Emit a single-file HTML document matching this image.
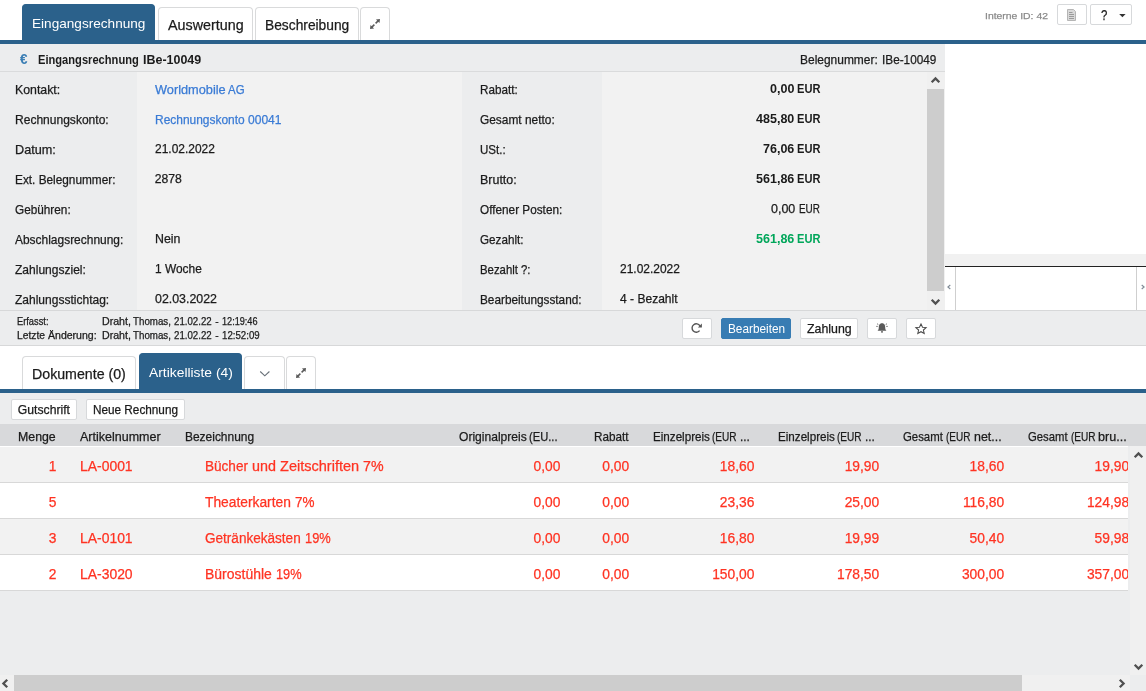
<!DOCTYPE html>
<html lang="de">
<head>
<meta charset="utf-8">
<title>Eingangsrechnung IBe-10049</title>
<style>
*{box-sizing:border-box;margin:0;padding:0}
html,body{width:1146px;height:691px;overflow:hidden;background:#fff}
body{position:relative;font-family:"Liberation Sans",sans-serif;color:#222;font-size:12px}
.a{position:absolute}
.t{position:absolute;white-space:nowrap;line-height:16px;-webkit-text-stroke:0.25px currentColor;transform-origin:0 0}
.tab{position:absolute;background:#fff;border:1px solid #d9dadb;border-bottom:none;border-radius:4px 4px 0 0}
.tab.act{background:#2b618b;border-color:#2b618b}
.blue{position:absolute;left:0;width:1146px;height:4px;background:#2b618b}
.btn{position:absolute;background:#fff;border:1px solid #d7d9db;border-radius:2px;height:21px}
.btn.pri{background:#377cb3;border-color:#377cb3;border-radius:2px}
.row{position:absolute;left:0;width:1128.1px;height:36px;border-bottom:1px solid #d8d8d8}
svg{position:absolute;overflow:visible}
</style>
</head>
<body>

<!-- ===== top tab strip ===== -->
<div class="tab act" style="left:22px;top:4px;width:133px;height:37px"></div>
<div class="tab" style="left:158px;top:7px;width:95px;height:34px"></div>
<div class="tab" style="left:255px;top:7px;width:104px;height:34px"></div>
<div class="tab" style="left:360px;top:7px;width:30px;height:34px"></div>
<svg style="left:370px;top:19px" width="10" height="10" viewBox="0 0 10 10"><g fill="#5a5a5a" stroke="none"><polygon points="10,0 5.9,0.5 9.5,4.1"/><polygon points="0,10 4.1,9.5 0.5,5.9"/></g><path d="M8.4 1.6 L5.6 4.4 M1.6 8.4 L4.4 5.6" stroke="#5a5a5a" stroke-width="1.5" fill="none"/></svg>
<div class="blue" style="top:40px"></div>

<div class="btn" style="left:1057px;top:4px;width:30px"></div>
<svg style="left:1067px;top:9px" width="9" height="12" viewBox="0 0 9 12"><path d="M0.5 0.5 H6.5 L8.5 2.5 V11.5 H0.5 Z" fill="#d9d9d9" stroke="#b5b5b5" stroke-width="1"/><path d="M2 3.5 H5.5 M2 5.5 H7 M2 7.5 H7 M2 9.5 H7" stroke="#9a9a9a" stroke-width="1"/></svg>
<div class="btn" style="left:1090px;top:4px;width:42px"></div>
<svg style="left:1119px;top:14px" width="7" height="4" viewBox="0 0 7 4"><polygon points="0.2,0 6.6,0 3.4,3.3" fill="#333"/></svg>

<!-- ===== detail panel ===== -->
<div class="a" style="left:0;top:44px;width:944.8px;height:28px;background:#ecedee;border-bottom:1px solid #dadbdc"></div>
<div class="a" style="left:0;top:72px;width:944.8px;height:238px;background:#f2f2f2"></div>
<div class="a" style="left:0;top:72px;width:137px;height:238px;background:#ecedee"></div>
<div class="a" style="left:462px;top:72px;width:140px;height:238px;background:#ecedee"></div>
<!-- panel scrollbar -->
<div class="a" style="left:927px;top:72px;width:17.8px;height:238px;background:#f0f0f0"></div>
<div class="a" style="left:927px;top:89px;width:16.8px;height:201.6px;background:#cdcdcd"></div>
<svg style="left:931px;top:77px" width="9" height="6" viewBox="0 0 9 6"><path d="M0.7 5.2 L4.5 1.4 L8.3 5.2" fill="none" stroke="#505050" stroke-width="2.3"/></svg>
<svg style="left:931px;top:299px" width="9" height="6" viewBox="0 0 9 6"><path d="M0.7 0.8 L4.5 4.6 L8.3 0.8" fill="none" stroke="#505050" stroke-width="2.3"/></svg>

<!-- right preview pane -->
<div class="a" style="left:945px;top:254px;width:201px;height:12px;background:#f1f1f1"></div>
<div class="a" style="left:945px;top:266px;width:201px;height:1px;background:#222"></div>
<div class="a" style="left:955px;top:267px;width:1px;height:43px;background:#cfcfcf"></div>
<div class="a" style="left:1136px;top:267px;width:1px;height:43px;background:#cfcfcf"></div>
<svg style="left:947px;top:284px" width="4" height="6" viewBox="0 0 4 6"><path d="M3.3 1 L0.9 3 L3.3 5" fill="none" stroke="#7f8a96" stroke-width="1.1"/></svg>
<svg style="left:1141px;top:284px" width="4" height="6" viewBox="0 0 4 6"><path d="M0.7 1 L3.1 3 L0.7 5" fill="none" stroke="#7f8a96" stroke-width="1.1"/></svg>

<!-- ===== footer / action bar ===== -->
<div class="a" style="left:0;top:310px;width:1146px;height:36px;background:#ecedee;border-top:1px solid #d7d8d9;border-bottom:1px solid #d7d8d9"></div>
<div class="btn" style="left:682px;top:318px;width:30px"></div>
<svg style="left:691px;top:323px" width="11" height="10" viewBox="0 0 11 10"><path d="M8.6 7.6 A4.2 4.2 0 1 1 8.9 2.9" fill="none" stroke="#555" stroke-width="1.4"/><polygon points="10.9,0.6 10.9,4.6 6.9,4.6" fill="#555"/></svg>
<div class="btn pri" style="left:721px;top:318px;width:70px"></div>
<div class="btn" style="left:800px;top:318px;width:58px"></div>
<div class="btn" style="left:867px;top:318px;width:30px"></div>
<svg style="left:876px;top:323px" width="12" height="10" viewBox="0 0 12 10"><path d="M6 0.2 C3.3 0.2 2.8 2.6 2.8 4.4 C2.8 6 2.3 6.8 1.5 7.7 H10.5 C9.7 6.8 9.2 6 9.2 4.4 C9.2 2.6 8.7 0.2 6 0.2 Z" fill="#5a5a5a"/><path d="M5 8.3 H7 V9 A1 0.8 0 0 1 5 9 Z" fill="#5a5a5a"/><path d="M0.2 3.4 H1.8 M10.2 3.4 H11.8 M1 0.7 L2.3 1.6 M11 0.7 L9.7 1.6" stroke="#5a5a5a" stroke-width="0.8"/></svg>
<div class="btn" style="left:906px;top:318px;width:30px"></div>
<svg style="left:915px;top:323px" width="12" height="11" viewBox="0 0 12 11"><path d="M6 0.9 L7.5 4.2 L11.1 4.6 L8.4 7 L9.2 10.5 L6 8.7 L2.8 10.5 L3.6 7 L0.9 4.6 L4.5 4.2 Z" fill="none" stroke="#4a4a4a" stroke-width="1.05" stroke-linejoin="miter"/></svg>

<!-- ===== lower tab strip ===== -->
<div class="tab" style="left:22px;top:356px;width:114px;height:34px"></div>
<div class="tab act" style="left:139px;top:353px;width:103px;height:37px"></div>
<div class="tab" style="left:244px;top:356px;width:41px;height:34px"></div>
<svg style="left:260px;top:370.6px" width="10" height="6" viewBox="0 0 10 6"><path d="M0.2 0.5 L4.8 4.8 L9.4 0.5" fill="none" stroke="#687078" stroke-width="1.1"/></svg>
<div class="tab" style="left:286px;top:356px;width:30px;height:34px"></div>
<svg style="left:296px;top:368px" width="10" height="10" viewBox="0 0 10 10"><g fill="#5a5a5a" stroke="none"><polygon points="10,0 5.9,0.5 9.5,4.1"/><polygon points="0,10 4.1,9.5 0.5,5.9"/></g><path d="M8.4 1.6 L5.6 4.4 M1.6 8.4 L4.4 5.6" stroke="#5a5a5a" stroke-width="1.5" fill="none"/></svg>
<div class="blue" style="top:389px"></div>

<!-- ===== grid ===== -->
<div class="a" style="left:0;top:393px;width:1146px;height:298px;background:#ecedee"></div>
<div class="btn" style="left:11px;top:399px;width:66px"></div>
<div class="btn" style="left:86px;top:399px;width:99px"></div>
<div class="a" style="left:0;top:424px;width:1146px;height:22px;background:#d8d9db"></div>
<div class="a" style="left:0;top:446px;width:1128.1px;height:1px;background:#fff;z-index:1"></div>
<div class="row" style="top:446px;height:37px;background:#f2f2f2"></div>
<div class="row" style="top:483px;background:#fff"></div>
<div class="row" style="top:519px;background:#f2f2f2"></div>
<div class="row" style="top:555px;background:#fff"></div>
<!-- grid scrollbars -->
<div class="a" style="left:1128.1px;top:446px;width:2px;height:229px;background:#ecedee;z-index:3"></div>
<div class="a" style="left:1130px;top:446px;width:16px;height:229px;background:#f0f0f0;z-index:3"></div>
<svg style="left:1134px;top:452px;z-index:4" width="9" height="6" viewBox="0 0 9 6"><path d="M0.7 5.2 L4.5 1.4 L8.3 5.2" fill="none" stroke="#505050" stroke-width="2.3"/></svg>
<svg style="left:1134px;top:664px;z-index:4" width="9" height="6" viewBox="0 0 9 6"><path d="M0.7 0.8 L4.5 4.6 L8.3 0.8" fill="none" stroke="#505050" stroke-width="2.3"/></svg>
<div class="a" style="left:0;top:675px;width:1130px;height:16px;background:#f0f0f0"></div>
<div class="a" style="left:14px;top:675px;width:1008px;height:16px;background:#cdcdcd"></div>
<svg style="left:2px;top:679px" width="6" height="9" viewBox="0 0 6 9"><path d="M5.2 0.7 L1.4 4.5 L5.2 8.3" fill="none" stroke="#505050" stroke-width="2.3"/></svg>
<svg style="left:1119px;top:679px" width="6" height="9" viewBox="0 0 6 9"><path d="M0.8 0.7 L4.6 4.5 L0.8 8.3" fill="none" stroke="#505050" stroke-width="2.3"/></svg>

<!-- ===== text ===== -->
<div id="txt" style="position:absolute;left:0;top:0;width:1146px;height:691px;z-index:2;will-change:transform">
<div class="t" style="font-size:13.5px;color:#fff;-webkit-text-stroke:0;left:31.80px;top:16.00px;transform:scaleX(1.0072);">Eingangsrechnung</div>
<div class="t" style="font-size:14.2px;color:#1b1b1b;left:167.60px;top:17.00px;transform:scaleX(1.0092);">Auswertung</div>
<div class="t" style="font-size:14.2px;color:#1b1b1b;left:264.71px;top:17.00px;transform:scaleX(0.9713);">Beschreibung</div>
<div class="t" style="font-size:9.9px;color:#8a8a8a;left:984.77px;top:8.00px;transform:scaleX(1.0519);">Interne ID: 42</div>
<div class="t" style="font-size:14.3px;color:#222;left:1101.40px;top:7.00px;transform:scaleX(0.8);">?</div>
<div class="t" style="font-size:14.5px;color:#3b7eb4;font-weight:700;-webkit-text-stroke:0;left:19.60px;top:51.20px;transform:scaleX(0.93);">€</div>
<div>
<span class="t" style="font-size:12.2px;color:#1b1b1b;font-weight:700;-webkit-text-stroke:0;left:38.04px;top:52.00px;transform:scaleX(0.9134);">Eingangsrechnung </span>
<span class="t" style="font-size:12.2px;color:#1b1b1b;font-weight:700;-webkit-text-stroke:0;left:142.89px;top:52.00px;transform:scaleX(1.0229);">IBe-10049</span>
</div>
<div>
<span class="t" style="font-size:12.2px;color:#1b1b1b;left:800.11px;top:52.00px;transform:scaleX(0.9813);">Belegnummer: </span>
<span class="t" style="font-size:12.2px;color:#1b1b1b;left:881.52px;top:52.00px;transform:scaleX(0.9665);">IBe-10049</span>
</div>
<div class="t" style="font-size:12.2px;color:#1b1b1b;left:14.69px;top:82.00px;transform:scaleX(1.0110);">Kontakt:</div>
<div class="t" style="font-size:12.2px;color:#1b1b1b;left:14.71px;top:112.00px;transform:scaleX(0.9876);">Rechnungskonto:</div>
<div class="t" style="font-size:12.2px;color:#1b1b1b;left:14.68px;top:142.00px;transform:scaleX(1.0392);">Datum:</div>
<div class="t" style="font-size:12.2px;color:#1b1b1b;left:14.72px;top:172.00px;transform:scaleX(0.9694);">Ext. Belegnummer:</div>
<div class="t" style="font-size:12.2px;color:#1b1b1b;left:14.72px;top:202.00px;transform:scaleX(0.9665);">Gebühren:</div>
<div class="t" style="font-size:12.2px;color:#1b1b1b;left:14.71px;top:232.00px;transform:scaleX(0.9805);">Abschlagsrechnung:</div>
<div class="t" style="font-size:12.2px;color:#1b1b1b;left:14.71px;top:262.00px;transform:scaleX(0.9871);">Zahlungsziel:</div>
<div class="t" style="font-size:12.2px;color:#1b1b1b;left:14.71px;top:292.00px;transform:scaleX(0.9859);">Zahlungsstichtag:</div>
<div>
<span class="t" style="font-size:12.2px;color:#3a7bd5;left:154.68px;top:82.00px;transform:scaleX(1.0464);">Worldmobile </span>
<span class="t" style="font-size:12.2px;color:#3a7bd5;left:227.73px;top:82.00px;transform:scaleX(0.9392);">AG</span>
</div>
<div>
<span class="t" style="font-size:12.2px;color:#3a7bd5;left:155.11px;top:112.00px;transform:scaleX(0.9803);">Rechnungskonto </span>
<span class="t" style="font-size:12.2px;color:#3a7bd5;left:247.81px;top:112.00px;transform:scaleX(0.9881);">00041</span>
</div>
<div class="t" style="font-size:12.2px;color:#1b1b1b;left:154.71px;top:141.00px;transform:scaleX(0.9817);">21.02.2022</div>
<div class="t" style="font-size:12.2px;color:#1b1b1b;left:154.70px;top:171.00px;">2878</div>
<div class="t" style="font-size:12.2px;color:#1b1b1b;left:154.69px;top:231.00px;transform:scaleX(1.0134);">Nein</div>
<div class="t" style="font-size:12.2px;color:#1b1b1b;left:154.71px;top:261.00px;transform:scaleX(0.9771);">1 Woche</div>
<div class="t" style="font-size:12.2px;color:#1b1b1b;left:154.69px;top:291.00px;transform:scaleX(1.0167);">02.03.2022</div>
<div class="t" style="font-size:12.2px;color:#1b1b1b;left:479.82px;top:82.00px;transform:scaleX(0.9583);">Rabatt:</div>
<div class="t" style="font-size:12.2px;color:#1b1b1b;left:479.81px;top:112.00px;transform:scaleX(0.9756);">Gesamt netto:</div>
<div class="t" style="font-size:12.2px;color:#1b1b1b;left:479.83px;top:142.00px;transform:scaleX(0.9466);">USt.:</div>
<div class="t" style="font-size:12.2px;color:#1b1b1b;left:479.79px;top:172.00px;transform:scaleX(1.0227);">Brutto:</div>
<div class="t" style="font-size:12.2px;color:#1b1b1b;left:479.82px;top:202.00px;transform:scaleX(0.9662);">Offener Posten:</div>
<div class="t" style="font-size:12.2px;color:#1b1b1b;left:479.82px;top:232.00px;transform:scaleX(0.9574);">Gezahlt:</div>
<div class="t" style="font-size:12.2px;color:#1b1b1b;left:479.83px;top:262.00px;transform:scaleX(0.9323);">Bezahlt ?:</div>
<div class="t" style="font-size:12.2px;color:#1b1b1b;left:479.82px;top:292.00px;transform:scaleX(0.9670);">Bearbeitungsstand:</div>
<div>
<span class="t" style="font-size:12.2px;color:#1b1b1b;font-weight:700;-webkit-text-stroke:0;left:769.69px;top:81.00px;transform:scaleX(1.0293);">0,00 </span>
<span class="t" style="font-size:12.2px;color:#1b1b1b;font-weight:700;-webkit-text-stroke:0;left:797.05px;top:81.00px;transform:scaleX(0.9097);">EUR</span>
</div>
<div>
<span class="t" style="font-size:12.2px;color:#1b1b1b;font-weight:700;-webkit-text-stroke:0;left:755.79px;top:111.00px;transform:scaleX(1.0281);">485,80 </span>
<span class="t" style="font-size:12.2px;color:#1b1b1b;font-weight:700;-webkit-text-stroke:0;left:797.05px;top:111.00px;transform:scaleX(0.9097);">EUR</span>
</div>
<div>
<span class="t" style="font-size:12.2px;color:#1b1b1b;font-weight:700;-webkit-text-stroke:0;left:762.79px;top:141.00px;transform:scaleX(1.0271);">76,06 </span>
<span class="t" style="font-size:12.2px;color:#1b1b1b;font-weight:700;-webkit-text-stroke:0;left:797.05px;top:141.00px;transform:scaleX(0.9097);">EUR</span>
</div>
<div>
<span class="t" style="font-size:12.2px;color:#1b1b1b;font-weight:700;-webkit-text-stroke:0;left:755.79px;top:171.00px;transform:scaleX(1.0281);">561,86 </span>
<span class="t" style="font-size:12.2px;color:#1b1b1b;font-weight:700;-webkit-text-stroke:0;left:797.05px;top:171.00px;transform:scaleX(0.9097);">EUR</span>
</div>
<div>
<span class="t" style="font-size:12.2px;color:#1b1b1b;left:771.49px;top:201.00px;transform:scaleX(1.0249);">0,00 </span>
<span class="t" style="font-size:12.2px;color:#1b1b1b;left:799.49px;top:201.00px;transform:scaleX(0.8126);">EUR</span>
</div>
<div>
<span class="t" style="font-size:12.2px;color:#00a65a;font-weight:700;-webkit-text-stroke:0;left:755.79px;top:231.00px;transform:scaleX(1.0281);">561,86 </span>
<span class="t" style="font-size:12.2px;color:#00a65a;font-weight:700;-webkit-text-stroke:0;left:797.05px;top:231.00px;transform:scaleX(0.9097);">EUR</span>
</div>
<div class="t" style="font-size:12.2px;color:#1b1b1b;left:619.71px;top:261.00px;transform:scaleX(0.9817);">21.02.2022</div>
<div class="t" style="font-size:12.2px;color:#1b1b1b;left:619.71px;top:291.00px;transform:scaleX(0.9884);">4 - Bezahlt</div>
<div class="t" style="font-size:10.2px;color:#1b1b1b;left:17.04px;top:313.60px;transform:scaleX(0.9122);">Erfasst:</div>
<div>
<span class="t" style="font-size:10.2px;color:#1b1b1b;left:17.00px;top:327.60px;transform:scaleX(1.0088);">Letzte </span>
<span class="t" style="font-size:10.2px;color:#1b1b1b;left:48.08px;top:327.60px;transform:scaleX(1.0344);">Änderung:</span>
</div>
<div>
<span class="t" style="font-size:10.2px;color:#1b1b1b;left:101.78px;top:313.60px;transform:scaleX(1.0430);">Draht, </span>
<span class="t" style="font-size:10.2px;color:#1b1b1b;left:133.12px;top:313.60px;transform:scaleX(0.9575);">Thomas, </span>
<span class="t" style="font-size:10.2px;color:#1b1b1b;left:174.03px;top:313.60px;transform:scaleX(0.9494);">21.02.22 </span>
<span class="t" style="font-size:10.2px;color:#1b1b1b;left:215.30px;top:313.60px;">- </span>
<span class="t" style="font-size:10.2px;color:#1b1b1b;left:222.35px;top:313.60px;transform:scaleX(0.8951);">12:19:46</span>
</div>
<div>
<span class="t" style="font-size:10.2px;color:#1b1b1b;left:101.78px;top:327.60px;transform:scaleX(1.0430);">Draht, </span>
<span class="t" style="font-size:10.2px;color:#1b1b1b;left:133.12px;top:327.60px;transform:scaleX(0.9575);">Thomas, </span>
<span class="t" style="font-size:10.2px;color:#1b1b1b;left:174.03px;top:327.60px;transform:scaleX(0.9494);">21.02.22 </span>
<span class="t" style="font-size:10.2px;color:#1b1b1b;left:215.30px;top:327.60px;">- </span>
<span class="t" style="font-size:10.2px;color:#1b1b1b;left:222.33px;top:327.60px;transform:scaleX(0.9494);">12:52:09</span>
</div>
<div class="t" style="font-size:12.2px;color:#fff;-webkit-text-stroke:0;left:727.72px;top:320.60px;transform:scaleX(0.9680);">Bearbeiten</div>
<div class="t" style="font-size:12.2px;color:#1b1b1b;left:806.79px;top:320.60px;transform:scaleX(1.0152);">Zahlung</div>
<div class="t" style="font-size:14.2px;color:#1b1b1b;left:32.00px;top:366.00px;">Dokumente (0)</div>
<div class="t" style="font-size:13.5px;color:#fff;-webkit-text-stroke:0;left:148.69px;top:365.00px;transform:scaleX(1.0252);">Artikelliste (4)</div>
<div class="t" style="font-size:12.2px;color:#1b1b1b;left:17.80px;top:401.50px;">Gutschrift</div>
<div class="t" style="font-size:12.2px;color:#1b1b1b;left:93.02px;top:401.50px;transform:scaleX(0.9645);">Neue Rechnung</div>
<div class="t" style="font-size:12.2px;color:#1b1b1b;left:17.79px;top:429.00px;transform:scaleX(1.0120);">Menge</div>
<div class="t" style="font-size:12.2px;color:#1b1b1b;left:79.59px;top:429.00px;transform:scaleX(1.0263);">Artikelnummer</div>
<div class="t" style="font-size:12.2px;color:#1b1b1b;left:184.81px;top:429.00px;transform:scaleX(0.9801);">Bezeichnung</div>
<div>
<span class="t" style="font-size:12.2px;color:#1b1b1b;left:458.60px;top:429.00px;transform:scaleX(0.9908);">Originalpreis </span>
<span class="t" style="font-size:12.2px;color:#1b1b1b;left:528.94px;top:429.00px;transform:scaleX(0.9152);">(EU...</span>
</div>
<div class="t" style="font-size:12.2px;color:#1b1b1b;left:593.92px;top:429.00px;transform:scaleX(0.9621);">Rabatt</div>
<div>
<span class="t" style="font-size:12.2px;color:#1b1b1b;left:652.82px;top:429.00px;transform:scaleX(0.9552);">Einzelpreis </span>
<span class="t" style="font-size:12.2px;color:#1b1b1b;left:712.09px;top:429.00px;transform:scaleX(0.8265);">(EUR </span>
<span class="t" style="font-size:12.2px;color:#1b1b1b;left:740.41px;top:429.00px;transform:scaleX(0.9704);">...</span>
</div>
<div>
<span class="t" style="font-size:12.2px;color:#1b1b1b;left:777.62px;top:429.00px;transform:scaleX(0.9552);">Einzelpreis </span>
<span class="t" style="font-size:12.2px;color:#1b1b1b;left:836.89px;top:429.00px;transform:scaleX(0.8265);">(EUR </span>
<span class="t" style="font-size:12.2px;color:#1b1b1b;left:865.21px;top:429.00px;transform:scaleX(0.9704);">...</span>
</div>
<div>
<span class="t" style="font-size:12.2px;color:#1b1b1b;left:903.13px;top:429.00px;transform:scaleX(0.9335);">Gesamt </span>
<span class="t" style="font-size:12.2px;color:#1b1b1b;left:946.19px;top:429.00px;transform:scaleX(0.8195);">(EUR </span>
<span class="t" style="font-size:12.2px;color:#1b1b1b;left:973.59px;top:429.00px;transform:scaleX(1.0188);">net...</span>
</div>
<div>
<span class="t" style="font-size:12.2px;color:#1b1b1b;left:1028.14px;top:429.00px;transform:scaleX(0.9263);">Gesamt </span>
<span class="t" style="font-size:12.2px;color:#1b1b1b;left:1070.79px;top:429.00px;transform:scaleX(0.8265);">(EUR </span>
<span class="t" style="font-size:12.2px;color:#1b1b1b;left:1098.38px;top:429.00px;transform:scaleX(1.0343);">bru...</span>
</div>
<div class="t" style="font-size:13.8px;color:#ff3322;left:48.81px;top:458.70px;">1</div>
<div class="t" style="font-size:13.8px;color:#ff3322;left:79.60px;top:458.70px;transform:scaleX(1.0084);">LA-0001</div>
<div>
<span class="t" style="font-size:13.8px;color:#ff3322;left:205.01px;top:458.70px;transform:scaleX(0.9832);">Bücher </span>
<span class="t" style="font-size:13.8px;color:#ff3322;left:251.78px;top:458.70px;transform:scaleX(1.0394);">und </span>
<span class="t" style="font-size:13.8px;color:#ff3322;left:279.57px;top:458.70px;transform:scaleX(1.0532);">Zeitschriften </span>
<span class="t" style="font-size:13.8px;color:#ff3322;left:362.59px;top:458.70px;transform:scaleX(1.0289);">7%</span>
</div>
<div class="t" style="font-size:13.8px;color:#ff3322;left:533.54px;top:458.70px;">0,00</div>
<div class="t" style="font-size:13.8px;color:#ff3322;left:602.34px;top:458.70px;">0,00</div>
<div class="t" style="font-size:13.8px;color:#ff3322;left:719.87px;top:458.70px;">18,60</div>
<div class="t" style="font-size:13.8px;color:#ff3322;left:844.67px;top:458.70px;">19,90</div>
<div class="t" style="font-size:13.8px;color:#ff3322;left:969.57px;top:458.70px;">18,60</div>
<div class="t" style="font-size:13.8px;color:#ff3322;left:1094.57px;top:458.70px;">19,90</div>
<div class="t" style="font-size:13.8px;color:#ff3322;left:48.81px;top:494.70px;">5</div>
<div>
<span class="t" style="font-size:13.8px;color:#ff3322;left:205.00px;top:494.70px;">Theaterkarten </span>
<span class="t" style="font-size:13.8px;color:#ff3322;left:295.21px;top:494.70px;transform:scaleX(0.9761);">7%</span>
</div>
<div class="t" style="font-size:13.8px;color:#ff3322;left:533.54px;top:494.70px;">0,00</div>
<div class="t" style="font-size:13.8px;color:#ff3322;left:602.34px;top:494.70px;">0,00</div>
<div class="t" style="font-size:13.8px;color:#ff3322;left:719.87px;top:494.70px;">23,36</div>
<div class="t" style="font-size:13.8px;color:#ff3322;left:844.67px;top:494.70px;">25,00</div>
<div class="t" style="font-size:13.8px;color:#ff3322;left:962.91px;top:494.70px;">116,80</div>
<div class="t" style="font-size:13.8px;color:#ff3322;left:1086.90px;top:494.70px;">124,98</div>
<div class="t" style="font-size:13.8px;color:#ff3322;left:48.81px;top:530.70px;">3</div>
<div class="t" style="font-size:13.8px;color:#ff3322;left:79.60px;top:530.70px;transform:scaleX(1.0084);">LA-0101</div>
<div>
<span class="t" style="font-size:13.8px;color:#ff3322;left:205.01px;top:530.70px;transform:scaleX(0.9823);">Getränkekästen </span>
<span class="t" style="font-size:13.8px;color:#ff3322;left:304.93px;top:530.70px;transform:scaleX(0.9315);">19%</span>
</div>
<div class="t" style="font-size:13.8px;color:#ff3322;left:533.54px;top:530.70px;">0,00</div>
<div class="t" style="font-size:13.8px;color:#ff3322;left:602.34px;top:530.70px;">0,00</div>
<div class="t" style="font-size:13.8px;color:#ff3322;left:719.87px;top:530.70px;">16,80</div>
<div class="t" style="font-size:13.8px;color:#ff3322;left:844.67px;top:530.70px;">19,99</div>
<div class="t" style="font-size:13.8px;color:#ff3322;left:969.57px;top:530.70px;">50,40</div>
<div class="t" style="font-size:13.8px;color:#ff3322;left:1094.57px;top:530.70px;">59,98</div>
<div class="t" style="font-size:13.8px;color:#ff3322;left:48.81px;top:566.70px;">2</div>
<div class="t" style="font-size:13.8px;color:#ff3322;left:79.60px;top:566.70px;transform:scaleX(1.0084);">LA-3020</div>
<div>
<span class="t" style="font-size:13.8px;color:#ff3322;left:204.99px;top:566.70px;transform:scaleX(1.0128);">Bürostühle </span>
<span class="t" style="font-size:13.8px;color:#ff3322;left:276.04px;top:566.70px;transform:scaleX(0.9277);">19%</span>
</div>
<div class="t" style="font-size:13.8px;color:#ff3322;left:533.54px;top:566.70px;">0,00</div>
<div class="t" style="font-size:13.8px;color:#ff3322;left:602.34px;top:566.70px;">0,00</div>
<div class="t" style="font-size:13.8px;color:#ff3322;left:712.20px;top:566.70px;">150,00</div>
<div class="t" style="font-size:13.8px;color:#ff3322;left:837.00px;top:566.70px;">178,50</div>
<div class="t" style="font-size:13.8px;color:#ff3322;left:961.90px;top:566.70px;">300,00</div>
<div class="t" style="font-size:13.8px;color:#ff3322;left:1086.90px;top:566.70px;">357,00</div>
</div>

</body>
</html>
